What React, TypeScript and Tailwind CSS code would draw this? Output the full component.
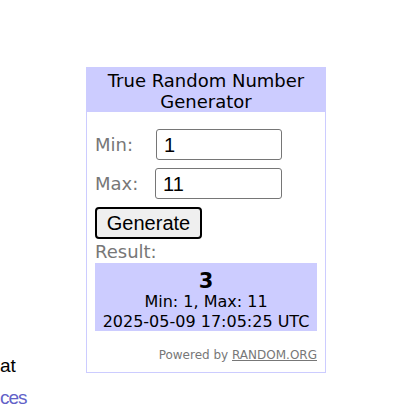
import React from "react";

export default function App() {
  const vf = { fontFamily: '"DejaVu Sans", Verdana, sans-serif' };
  const af = { fontFamily: '"Liberation Sans", Arial, sans-serif' };
  return (
    <div className="relative w-[420px] h-[411px] bg-white overflow-hidden" style={vf}>
      <div className="flex flex-row items-start">
        <div className="w-[86px] pt-[350px] text-[19px] text-black" style={af}>
          <div className="leading-[32px]">at</div>
          <div className="leading-[32px] text-[#6262c8] tracking-[-1px]">ces</div>
        </div>
        <div className="mt-[67px] w-[240px] flex flex-col">
          <div className="h-[45px] bg-[#ccccff] text-black text-[18px] leading-[21px] text-center pt-[3px]">
            True Random Number
            <br />
            Generator
          </div>
          <div className="border border-t-0 border-[#ccccff] px-[8px] pt-[17px] pb-[10px] flex flex-col">
            <div className="flex items-center h-[31px]">
              <span className="w-[61px] text-[18px] text-[#777777]">Min:</span>
              <div className="w-[126px] h-[31px] border border-[#767676] rounded-[3px] pl-[7px] flex items-center text-[20px] text-black" style={af}>1</div>
            </div>
            <div className="flex items-center h-[31px] mt-[8px]">
              <span className="w-[60px] text-[18px] text-[#777777]">Max:</span>
              <div className="w-[127px] h-[31px] border border-[#767676] rounded-[3px] pl-[7px] flex items-center text-[20px] text-black" style={af}>11</div>
            </div>
            <div className="mt-[8px]">
              <div className="w-[107px] h-[32px] border-2 border-black rounded-[4px] bg-[#efefef] flex items-center justify-center text-[20px] text-black" style={af}>Generate</div>
            </div>
            <div className="text-[18px] leading-[23px] text-[#777777] pt-[1px]">Result:</div>
            <div className="bg-[#ccccff] h-[68px] text-center text-black pt-[9px]">
              <div className="text-[21px] font-bold leading-[18px]">3</div>
              <div className="text-[16px] leading-[20px] mt-[2px]">Min: 1, Max: 11</div>
              <div className="text-[16px] leading-[20px]">2025-05-09 17:05:25 UTC</div>
            </div>
            <div className="text-right text-[12px] text-[#777777] mt-[17px] leading-[14px]">
              Powered by <span className="underline">RANDOM.ORG</span>
            </div>
          </div>
        </div>
      </div>
    </div>
  );
}
